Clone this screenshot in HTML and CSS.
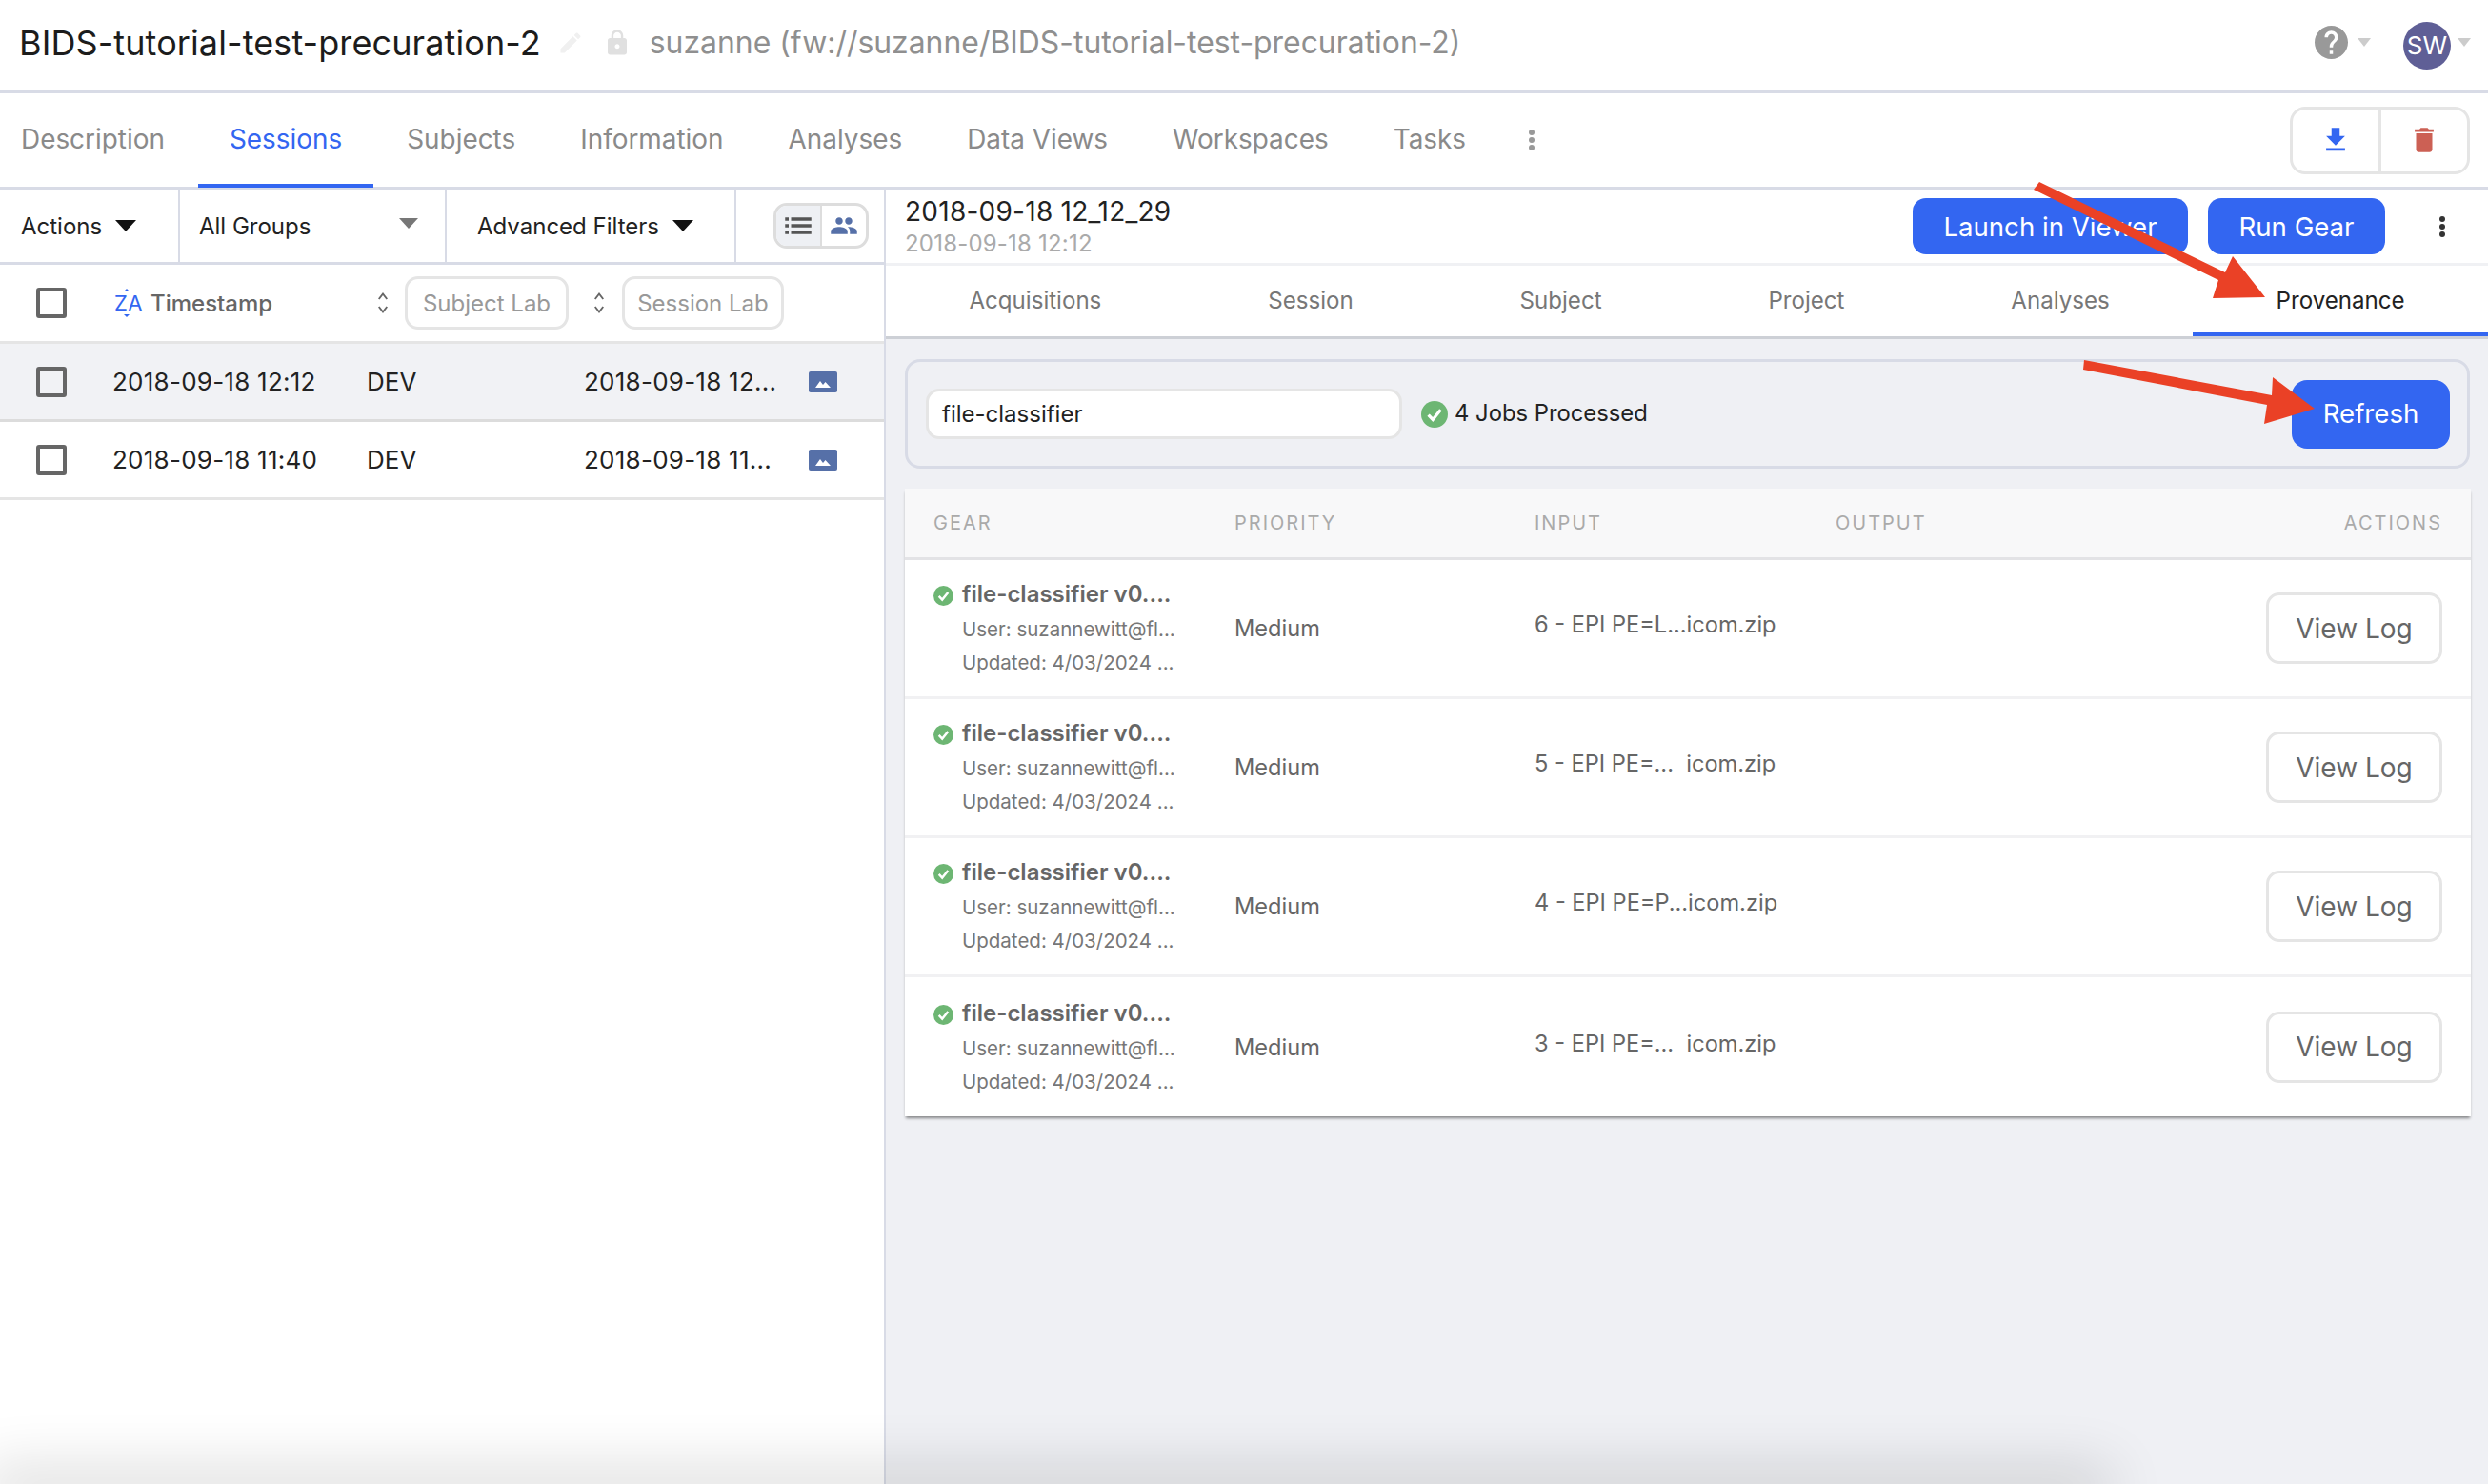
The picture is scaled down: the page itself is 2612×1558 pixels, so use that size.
FILE: index.html
```html
<!DOCTYPE html>
<html lang="en">
  <head>
  <meta charset="utf-8">
  <title>BIDS-tutorial-test-precuration-2</title>
  <link rel="stylesheet" href="styles.css">
  </head>
  <body>
    <svg class="sprites" width="0" height="0">
      <symbol id="i-check" viewBox="0 0 24 24"><circle cx="12" cy="12" r="12" fill="#6db673"/><path d="M6.5 12.5l4 4.2 7-8.7" fill="none" stroke="#fff" stroke-width="2.8"/></symbol>
      <symbol id="i-image" viewBox="0 0 30 22"><rect width="30" height="22" rx="2" fill="#5670a8"/><path d="M7 17l5-7 3 4 2.500-3 5.500 6z" fill="#fff"/></symbol>
      <symbol id="i-sort" viewBox="0 0 12 24"><path d="M6 1l5 6.500-1.500 1L6 4 2.500 8.500 1 7.500zM6 23l-5-6.500 1.500-1L6 20l3.500-4.500 1.500 1z" fill="#666"/></symbol>
    </svg>

    <header class="topbar">
      <span class="project-name">BIDS-tutorial-test-precuration-2</span>
      <svg class="pencil" viewBox="0 0 24 24"><path d="M3 17.250V21h3.750L17.810 9.940l-3.750-3.750L3 17.250zM20.710 7.040c.39-.39.39-1.020 0-1.410l-2.340-2.340c-.39-.39-1.020-.39-1.410 0l-1.830 1.830 3.750 3.750 1.830-1.830z"/></svg>
      <svg class="lock" viewBox="0 0 24 24"><path d="M18 8h-1V6c0-2.760-2.240-5-5-5S7 3.240 7 6v2H6c-1.100 0-2 .9-2 2v10c0 1.100.9 2 2 2h12c1.100 0 2-.9 2-2V10c0-1.100-.9-2-2-2zm-6 9c-1.100 0-2-.9-2-2s.9-2 2-2 2 .9 2 2-.9 2-2 2zm3.100-9H8.900V6c0-1.710 1.390-3.100 3.100-3.100 1.710 0 3.100 1.390 3.100 3.100v2z"/></svg>
      <span class="project-path">suzanne (fw://suzanne/BIDS-tutorial-test-precuration-2)</span>
      <div class="user-tools">
        <svg class="help" viewBox="2 2 20 20"><path d="M12 2C6.480 2 2 6.480 2 12s4.480 10 10 10 10-4.480 10-10S17.520 2 12 2zm1 17h-2v-2h2v2zm2.070-7.750l-.9.920C13.450 12.900 13 13.500 13 15h-2v-.5c0-1.100.45-2.100 1.170-2.830l1.240-1.260c.37-.36.59-.86.59-1.410 0-1.100-.9-2-2-2s-2 .9-2 2H8c0-2.210 1.790-4 4-4s4 1.790 4 4c0 .88-.36 1.680-.93 2.250z"/></svg>
        <span class="mini-caret help-caret"></span>
        <span class="avatar">SW</span>
        <span class="mini-caret"></span>
      </div>
    </header>

    <nav class="main-tabs">
      <a class="tab first">Description</a>
      <a class="tab active">Sessions</a>
      <a class="tab">Subjects</a>
      <a class="tab">Information</a>
      <a class="tab">Analyses</a>
      <a class="tab">Data Views</a>
      <a class="tab">Workspaces</a>
      <a class="tab">Tasks</a>
      <span class="kebab gray"><i></i><i></i><i></i></span>
      <div class="icon-group">
        <button class="icon-btn">
          <svg viewBox="0 0 24 24"><path fill="#3366f1" d="M19 9h-4V3H9v6H5l7 7 7-7zM5 18v2h14v-2H5z"/></svg>
        </button>
        <button class="icon-btn">
          <svg viewBox="0 0 24 24"><path fill="#cc6054" d="M6 19c0 1.100.9 2 2 2h8c1.100 0 2-.9 2-2V7H6v12zM19 4h-3.500l-1-1h-5l-1 1H5v2h14V4z"/></svg>
        </button>
      </div>
    </nav>

    <main class="workspace">
      <section class="sessions-pane">
        <div class="toolbar">
          <div class="tool actions-tool">Actions <span class="caret"></span></div>
          <div class="tool groups-tool">All Groups <span class="caret gray-caret"></span></div>
          <div class="tool filters-tool">Advanced Filters <span class="caret"></span></div>
          <div class="view-toggle">
            <span class="toggle-item on">
              <svg viewBox="0 0 24 24"><path fill="#555" d="M1 5h3v2.800H1zM6 5h17v2.800H6zM1 10.600h3v2.800H1zM6 10.600h17v2.800H6zM1 16.200h3V19H1zM6 16.200h17V19H6z"/></svg>
            </span>
            <span class="toggle-item">
              <svg viewBox="0 0 24 24"><path fill="#5670a8" d="M16 11c1.660 0 2.990-1.340 2.990-3S17.660 5 16 5c-1.660 0-3 1.340-3 3s1.340 3 3 3zm-8 0c1.660 0 2.990-1.340 2.990-3S9.660 5 8 5C6.340 5 5 6.340 5 8s1.340 3 3 3zm0 2c-2.330 0-7 1.170-7 3.500V19h14v-2.500c0-2.330-4.670-3.500-7-3.500zm8 0c-.29 0-.62.020-.97.050 1.160.84 1.970 1.970 1.970 3.450V19h6v-2.500c0-2.330-4.670-3.500-7-3.500z"/></svg>
            </span>
          </div>
        </div>

        <div class="session-head">
          <span class="checkbox"></span>
          <span class="head-label"><span class="za">ZA</span>Timestamp</span>
          <svg class="sort-icon"><use href="#i-sort"/></svg>
          <span class="head-input">Subject Lab</span>
          <svg class="sort-icon"><use href="#i-sort"/></svg>
          <span class="head-input">Session Lab</span>
        </div>

        <div class="session-row selected">
          <span class="checkbox"></span>
          <span class="date-cell">2018-09-18 12:12</span>
          <span>DEV</span>
          <span class="date-cell">2018-09-18 12...</span>
          <svg class="image-icon"><use href="#i-image"/></svg>
        </div>
        <div class="session-row">
          <span class="checkbox"></span>
          <span class="date-cell">2018-09-18 11:40</span>
          <span>DEV</span>
          <span class="date-cell">2018-09-18 11...</span>
          <svg class="image-icon"><use href="#i-image"/></svg>
        </div>
      </section>

      <section class="detail-pane">
        <div class="detail-head">
          <div class="detail-title">
            <div class="detail-name">2018-09-18 12_12_29</div>
            <div class="detail-date">2018-09-18 12:12</div>
          </div>
          <button class="btn-primary launch">Launch in Viewer</button>
          <button class="btn-primary run">Run Gear</button>
          <span class="kebab"><i></i><i></i><i></i></span>
        </div>

        <nav class="sub-tabs">
          <a class="sub-tab">Acquisitions</a>
          <a class="sub-tab">Session</a>
          <a class="sub-tab">Subject</a>
          <a class="sub-tab">Project</a>
          <a class="sub-tab">Analyses</a>
          <a class="sub-tab active">Provenance</a>
        </nav>

        <div class="jobs-filter">
          <span class="filter-input">file-classifier</span>
          <svg class="jobs-check"><use href="#i-check"/></svg>
          <span class="jobs-count">4 Jobs Processed</span>
          <button class="btn-primary refresh">Refresh</button>
        </div>

        <div class="jobs-table">
          <div class="jobs-row jobs-head">
            <span>GEAR</span>
            <span>PRIORITY</span>
            <span>INPUT</span>
            <span>OUTPUT</span>
            <span class="right">ACTIONS</span>
          </div>

          <div class="jobs-row job">
            <div class="gear">
              <svg class="gear-check"><use href="#i-check"/></svg>
              <div>
                <div class="gear-name">file-classifier v0....</div>
                <div class="gear-meta">User: suzannewitt@fl...</div>
                <div class="gear-meta">Updated: 4/03/2024 ...</div>
              </div>
            </div>
            <span class="priority">Medium</span>
            <span class="input-name">6 - EPI PE=L...icom.zip</span>
            <span></span>
            <span class="right"><button class="btn-log">View Log</button></span>
          </div>

          <div class="jobs-row job">
            <div class="gear">
              <svg class="gear-check"><use href="#i-check"/></svg>
              <div>
                <div class="gear-name">file-classifier v0....</div>
                <div class="gear-meta">User: suzannewitt@fl...</div>
                <div class="gear-meta">Updated: 4/03/2024 ...</div>
              </div>
            </div>
            <span class="priority">Medium</span>
            <span class="input-name">5 - EPI PE=...&nbsp; icom.zip</span>
            <span></span>
            <span class="right"><button class="btn-log">View Log</button></span>
          </div>

          <div class="jobs-row job">
            <div class="gear">
              <svg class="gear-check"><use href="#i-check"/></svg>
              <div>
                <div class="gear-name">file-classifier v0....</div>
                <div class="gear-meta">User: suzannewitt@fl...</div>
                <div class="gear-meta">Updated: 4/03/2024 ...</div>
              </div>
            </div>
            <span class="priority">Medium</span>
            <span class="input-name">4 - EPI PE=P...icom.zip</span>
            <span></span>
            <span class="right"><button class="btn-log">View Log</button></span>
          </div>

          <div class="jobs-row job">
            <div class="gear">
              <svg class="gear-check"><use href="#i-check"/></svg>
              <div>
                <div class="gear-name">file-classifier v0....</div>
                <div class="gear-meta">User: suzannewitt@fl...</div>
                <div class="gear-meta">Updated: 4/03/2024 ...</div>
              </div>
            </div>
            <span class="priority">Medium</span>
            <span class="input-name">3 - EPI PE=...&nbsp; icom.zip</span>
            <span></span>
            <span class="right"><button class="btn-log">View Log</button></span>
          </div>
        </div>
      </section>
    </main>

    <!-- red annotation arrows drawn over the screenshot -->
    <svg class="arrows" viewBox="0 0 2612 1558">
      <polygon points="2135,199 2141,191 2336,286 2344,269 2378,312 2323,313 2329,294" fill="#ea4126"/>
      <polygon points="2188,378 2187,388 2380,425 2377,445 2430,429 2386,396 2385,415" fill="#ea4126"/>
    </svg>
    <div class="bottom-shade"></div>
  </body>
</html>
```

FILE: styles.css
```css
* {
  margin: 0;
  padding: 0;
  box-sizing: border-box;
}

html, body {
  width: 2612px;
  height: 1558px;
  overflow: hidden;
}

body {
  position: relative;
  font-family: Inter, "Liberation Sans", sans-serif;
  font-size: 24px;
  color: #222;
  background: white;
}

button {
  font-family: inherit;
  cursor: pointer;
}

.sprites {
  position: absolute;
}

/* top bar */
.topbar {
  height: 98px;
  border-bottom: 3px solid #d8dbe6;
  display: flex;
  align-items: center;
  padding-left: 20px;
  padding-bottom: 6px;
}

.project-name {
  font-size: 36px;
  letter-spacing: 0.1px;
  color: #1c1c1c;
}

.pencil {
  width: 28px;
  height: 28px;
  margin-left: 17px;
  fill: #f0f0f0;
}

.lock {
  width: 30px;
  height: 30px;
  margin-left: 20px;
  fill: #e0e0e0;
}

.project-path {
  font-size: 31.9px;
  color: #8f8f8f;
  margin-left: 19px;
}

.user-tools {
  margin-left: auto;
  display: flex;
  align-items: center;
  padding-right: 18px;
}

.help {
  width: 35px;
  height: 35px;
  fill: #999;
}

.mini-caret {
  width: 0;
  height: 0;
  border-left: 7px solid transparent;
  border-right: 7px solid transparent;
  border-top: 9px solid #ccc;
  margin-left: 7px;
}

.help-caret {
  margin-left: 10px;
  margin-right: 34px;
}

.avatar {
  width: 50px;
  height: 50px;
  border-radius: 50%;
  background: #5f5f96;
  color: white;
  font-size: 26px;
  display: flex;
  align-items: center;
  justify-content: center;
  margin-top: 6px;
}

/* main tabs */
.main-tabs {
  height: 101px;
  border-bottom: 3px solid #d8dbe6;
  display: flex;
  align-items: stretch;
  gap: 2px;
  padding-right: 19px;
}

.tab {
  font-size: 27.9px;
  color: #8a8a8a;
  padding: 0 33px;
  display: flex;
  align-items: center;
  border-bottom: 4px solid transparent;
  margin-bottom: -1px;
}

.tab.first {
  padding-left: 22px;
}

.tab.active {
  color: #3366f1;
  border-bottom-color: #3366f1;
}

.kebab {
  display: flex;
  flex-direction: column;
  justify-content: center;
  gap: 2px;
  width: 6px;
}

.kebab i {
  width: 6px;
  height: 6px;
  border-radius: 50%;
  background: #333;
}

.kebab.gray {
  margin-left: 31px;
}

.kebab.gray i {
  background: #999;
}

.icon-group {
  margin-left: auto;
  align-self: center;
  display: flex;
  height: 71px;
  width: 189px;
  border: 3px solid #e5e5e5;
  border-radius: 16px;
}

.icon-btn {
  flex: 1;
  background: none;
  border: none;
  display: flex;
  align-items: center;
  justify-content: center;
}

.icon-btn + .icon-btn {
  border-left: 3px solid #e5e5e5;
}

.icon-btn svg {
  width: 34px;
  height: 34px;
}

/* page below tabs */
.workspace {
  display: flex;
  height: 1359px;
}

.sessions-pane {
  width: 930px;
  border-right: 2px solid #d8dbe6;
  flex-shrink: 0;
}

.toolbar {
  height: 79px;
  border-bottom: 3px solid #d8dbe6;
  display: flex;
  align-items: stretch;
}

.tool {
  display: flex;
  align-items: center;
  border-right: 2px solid #d8dbe6;
  gap: 14px;
}

.actions-tool {
  width: 189px;
  padding-left: 22px;
}

.groups-tool {
  width: 280px;
  padding-left: 20px;
  justify-content: space-between;
  padding-right: 28px;
}

.filters-tool {
  width: 304px;
  padding-left: 32px;
}

.caret {
  width: 0;
  height: 0;
  border-left: 11px solid transparent;
  border-right: 11px solid transparent;
  border-top: 12px solid #111;
}

.gray-caret {
  border-left-width: 10px;
  border-right-width: 10px;
  border-top: 11px solid #777;
  margin-top: -6px;
}

.view-toggle {
  display: flex;
  align-self: center;
  margin-left: 39px;
  width: 100px;
  height: 48px;
  border: 3px solid #ddd;
  border-radius: 14px;
  overflow: hidden;
}

.toggle-item {
  flex: 1;
  display: flex;
  align-items: center;
  justify-content: center;
}

.toggle-item.on {
  background: #eef0f4;
  border-right: 2px solid #ddd;
}

.toggle-item svg {
  width: 30px;
  height: 30px;
}

.session-head {
  height: 83px;
  border-bottom: 3px solid #e5e5e5;
  display: grid;
  grid-template-columns: 81px 277px 29px 198px 30px 170px;
  align-items: center;
  padding-left: 38px;
}

.checkbox {
  display: block;
  width: 32px;
  height: 32px;
  border: 4px solid #666;
  border-radius: 3px;
}

.head-label {
  display: flex;
  align-items: center;
  color: #666;
  font-size: 24px;
  font-weight: 500;
  gap: 10px;
}

.za {
  position: relative;
  color: #3366f1;
  font-size: 22px;
  font-weight: 400;
  letter-spacing: 0.5px;
  width: 28px;
  margin-left: 1px;
}

/* little carets above and below the sort letters */
.za::before, .za::after {
  content: "";
  position: absolute;
  left: 10px;
  border-left: 3px solid transparent;
  border-right: 3px solid transparent;
}

.za::before {
  top: -2px;
  border-bottom: 3px solid #3366f1;
}

.za::after {
  bottom: -2px;
  border-top: 3px solid #3366f1;
}

.sort-icon {
  width: 12px;
  height: 24px;
}

.head-input {
  height: 56px;
  width: 172px;
  border: 3px solid #e5e5e5;
  border-radius: 14px;
  color: #999;
  font-size: 24px;
  display: flex;
  align-items: center;
  justify-content: center;
  white-space: nowrap;
}

.head-input:last-child {
  width: 170px;
}

.session-row {
  height: 82px;
  border-bottom: 3px solid #e5e5e5;
  display: grid;
  grid-template-columns: 80px 267px 228px 236px 30px;
  align-items: center;
  padding-left: 38px;
  font-size: 26px;
  color: #222;
}

.date-cell {
  letter-spacing: 0.25px;
}

.session-row.selected {
  background: #f1f2f5;
  border-bottom-color: #dcdcdc;
}

.image-icon {
  width: 30px;
  height: 22px;
}

/* right side */
.detail-pane {
  flex: 1;
  background: #eff0f4;
}

.detail-head {
  height: 80px;
  background: white;
  border-bottom: 3px solid #f0f1f4;
  display: flex;
  align-items: center;
  padding-left: 20px;
}

.detail-title {
  margin-right: auto;
}

.detail-name {
  font-size: 28px;
  letter-spacing: 0.25px;
  color: #222;
}

.detail-date {
  font-size: 24px;
  letter-spacing: 0.2px;
  color: #aaa;
  margin-top: 2px;
}

.btn-primary {
  background: #3366f1;
  color: white;
  border: none;
  border-radius: 14px;
  font-size: 27.6px;
}

.launch {
  width: 289px;
  height: 59px;
}

.run {
  width: 186px;
  height: 59px;
  margin-left: 21px;
}

.detail-head .kebab {
  margin-left: 57px;
  margin-right: 45px;
}

.sub-tabs {
  height: 77px;
  background: white;
  border-bottom: 3px solid #cdd0d6;
  display: flex;
}

.sub-tab {
  flex: 1 1 auto;
  font-size: 24.1px;
  color: #777;
  text-align: center;
  padding-top: 22px;
  border-bottom: 4px solid transparent;
}

.sub-tab.active {
  color: #222;
  border-bottom-color: #3366f1;
}

.jobs-filter {
  margin: 21px 19px 21px 20px;
  height: 115px;
  border: 3px solid #d8dbe6;
  border-radius: 16px;
  display: flex;
  align-items: center;
  padding: 0 18px 0 19px;
}

.filter-input {
  width: 500px;
  height: 53px;
  background: white;
  border: 3px solid #e5e5e5;
  border-radius: 14px;
  padding-left: 14px;
  display: flex;
  align-items: center;
  font-size: 24px;
}

.jobs-check {
  width: 28px;
  height: 28px;
  margin-left: 20px;
}

.jobs-count {
  margin-left: 7px;
  margin-bottom: 2px;
  font-size: 23.8px;
}

.refresh {
  margin-left: auto;
  width: 166px;
  height: 72px;
  border-radius: 16px;
  padding-bottom: 2px;
}

.jobs-table {
  margin: 0 18px 0 20px;
  background: white;
  box-shadow: 0 3px 3px -1px rgba(0, 0, 0, 0.45);
}

.jobs-row {
  display: grid;
  grid-template-columns: 316px 315px 316px 316px 1fr;
  padding: 0 30px;
  align-items: center;
}

.jobs-head {
  height: 75px;
  background: #f8f8f9;
  border-bottom: 3px solid #e3e3e6;
  color: #aaa;
  font-size: 20px;
  letter-spacing: 2px;
}

.right {
  text-align: right;
}

.job {
  height: 146px;
  border-bottom: 3px solid #f1f1f3;
}

.job:last-child {
  border-bottom: none;
}

.gear {
  display: flex;
  gap: 9px;
  align-items: flex-start;
  padding-top: 4px;
}

.gear-check {
  width: 21px;
  height: 21px;
  margin-top: 5px;
  flex-shrink: 0;
}

.gear-name {
  font-size: 24px;
  font-weight: 600;
  color: #666;
  line-height: 30px;
  margin-top: -1px;
  margin-bottom: 4px;
}

.gear-meta {
  font-size: 20.5px;
  color: #777;
  line-height: 35px;
}

.priority {
  font-size: 23.6px;
  color: #666;
}

.input-name {
  font-size: 23.6px;
  color: #666;
  margin-top: -8px;
}

.btn-log {
  width: 185px;
  height: 75px;
  background: white;
  border: 3px solid #e5e5e5;
  border-radius: 14px;
  color: #666;
  font-size: 28px;
}

/* overlays */
.arrows {
  position: absolute;
  left: 0;
  top: 0;
  width: 2612px;
  height: 1558px;
  pointer-events: none;
}

.bottom-shade {
  position: absolute;
  left: 0;
  bottom: -6px;
  width: 2200px;
  height: 6px;
  box-shadow: 0 0 60px 16px rgba(0, 0, 0, 0.16);
}
```
